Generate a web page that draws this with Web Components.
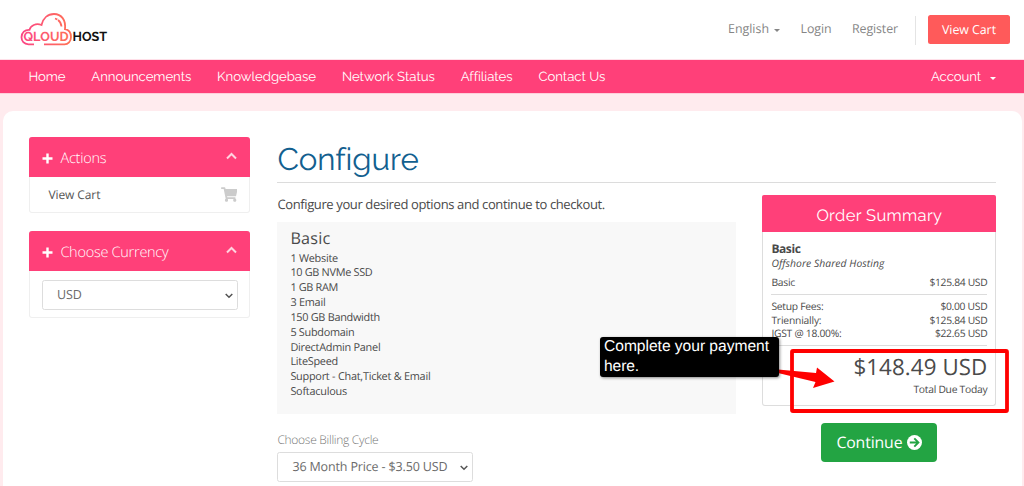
<!DOCTYPE html>
<html lang="en">
<head>
<meta charset="utf-8">
<title>Configure - QloudHost</title>
<style>
  :root {
    --pink: #ff4079;
    --head-font: Raleway, Lato, "Open Sans", sans-serif;
  }
  html, body { margin: 0; height: 486px; overflow: hidden; }
  body {
    background: #ffebee;
    color: #4a4a4a;
    font: 13px/1.5 "Open Sans", "Noto Sans", sans-serif;
    text-rendering: geometricPrecision;
  }
</style>
</head>
<body>
<shop-page>
  <site-header slot="header"></site-header>
  <site-nav slot="nav"></site-nav>
  <side-panel slot="side" label="Actions" width="46">
    <cart-link></cart-link>
  </side-panel>
  <side-panel slot="side" label="Choose Currency" width="108">
    <select-box style="margin:9px 12.5px 8px" width="25">USD</select-box>
  </side-panel>
  <product-config></product-config>
</shop-page>
<callout-note></callout-note>

<script>
function attach(el, html) {
  const template = document.createElement("template");
  template.innerHTML = html;
  el.attachShadow({ mode: "open" }).appendChild(
    template.content.cloneNode(true)
  );
}

// FitText.js: tracks a single line out to a set width
customElements.define(
  "fit-text",
  class FitText extends HTMLElement {
    constructor() {
      super();
      attach(this, `
      <style>
        :host { display: inline-block; white-space: nowrap; flex: none; }
        span { display: inline-block; }
      </style>
      <span><slot></slot></span>
      `);
    }
    connectedCallback() {
      const width = Number(this.getAttribute("width"));
      const span = this.shadowRoot.querySelector("span");
      const count = this.textContent.length;
      if (!width || count < 2) return;
      const natural = span.getBoundingClientRect().width;
      this.style.letterSpacing = (width - natural) / count + "px";
    }
  }
);

// SiteHeader.js
customElements.define(
  "site-header",
  class SiteHeader extends HTMLElement {
    constructor() {
      super();
      attach(this, `
      <style>
        :host {
          display: flex;
          align-items: center;
          justify-content: space-between;
          box-sizing: border-box;
          height: 60px;
          padding: 0 14px 0 20px;
          background: #fff;
          color: #858585;
          font-size: 12.4px;
        }
        .links { display: flex; align-items: center; }
        .links > * { margin-top: -2px; }
        .links .caret {
          border: 3px solid transparent;
          border-top-color: currentColor;
          border-bottom: 0;
          margin: 0 20.500px 0 5px;
        }
        .links .rule { width: 1px; height: 29px; background: #e4e4e4; margin: 0 12px 0 17px; }
        .links .cart {
          margin-top: -1px;
          width: 82px;
          height: 29px;
          line-height: 29px;
          border-radius: 2.5px;
          background: #ff5a5a;
          color: #fff;
          text-align: center;
        }
        svg { display: block; font: 700 13px Raleway, Inter, sans-serif; }
      </style>
      <svg width="90" height="36" viewBox="0 0 90 36" aria-label="QloudHost">
        <defs>
          <linearGradient id="g" x1="0" y1="0" x2="52" y2="0" gradientUnits="userSpaceOnUse">
            <stop offset="0" stop-color="#fb4487"/>
            <stop offset="1" stop-color="#ff7354"/>
          </linearGradient>
        </defs>
        <path d="M14 32.3H8.500C4 32.300 1.500 29 1.500 25.300C1.500 20.500 5 17.500 9.500 17.800C10.500 13.500 16 10.800 21.500 13C23 6 28 2 34 2C41.500 2 46 8 45 17.200C49 18 51 21 51 25C51 29.500 48 32.300 44.500 32.300H24" fill="none" stroke="url(#g)" stroke-width="1.800"/>
        <path d="M35 6.500C38.500 7.500 41 10 41.500 14.500" fill="none" stroke="url(#g)" stroke-width="1.800" stroke-dasharray="2.500 .8 20"/>
        <text x="3.500" y="29" fill="url(#g)" textLength="45" lengthAdjust="spacingAndGlyphs">QLOUD</text>
        <text x="52.500" y="29" fill="#111" textLength="34.500" lengthAdjust="spacingAndGlyphs">HOST</text>
      </svg>
      <div class="links">
        <fit-text width="41">English</fit-text><i class="caret"></i>
        <fit-text width="31" style="margin-right:20.5px">Login</fit-text>
        <fit-text width="46">Register</fit-text>
        <i class="rule"></i>
        <div class="cart"><fit-text width="54">View Cart</fit-text></div>
      </div>
      `);
    }
  }
);

// SiteNav.js
customElements.define(
  "site-nav",
  class SiteNav extends HTMLElement {
    constructor() {
      super();
      const items = [
        ["Home", 37],
        ["Announcements", 100],
        ["Knowledgebase", 99],
        ["Network Status", 93],
        ["Affiliates", 50],
        ["Contact Us", 67],
      ];
      attach(this, `
      <style>
        :host {
          display: flex;
          align-items: center;
          gap: 25.800px;
          box-sizing: border-box;
          height: 33px;
          margin-bottom: 18px;
          padding: 2px 28px 0 28.500px;
          background: var(--pink);
          box-shadow: 0 0 1px var(--pink);
          color: #fff;
          font: 13.2px/20px var(--head-font);
        }
        .account { display: flex; align-items: center; gap: 9px; margin-left: auto; }
        .account i {
          border: 3px solid transparent;
          border-top-color: #fff;
          border-bottom: 0;
          margin-top: 1px;
        }
      </style>
      ${items.map(([name, w]) => `<fit-text width="${w}">${name}</fit-text>`).join("")}
      <div class="account"><fit-text width="50">Account</fit-text><i></i></div>
      `);
    }
  }
);

// ShopPage.js
customElements.define(
  "shop-page",
  class ShopPage extends HTMLElement {
    constructor() {
      super();
      attach(this, `
      <style>
        :host { display: block; }
        main {
          display: grid;
          grid-template-columns: 221px 719px;
          column-gap: 27px;
          align-items: start;
          box-sizing: border-box;
          height: 375px;
          margin: 0 2px 0 3px;
          padding: 26px 0 0 26.400px;
          border-radius: 10px 10px 0 0;
          background: #fff;
        }
        aside { display: grid; gap: 18px; }
      </style>
      <slot name="header"></slot>
      <slot name="nav"></slot>
      <main>
        <aside><slot name="side"></slot></aside>
        <slot></slot>
      </main>
      `);
    }
  }
);

// SidePanel.js
customElements.define(
  "side-panel",
  class SidePanel extends HTMLElement {
    constructor() {
      super();
      attach(this, `
      <style>
        :host {
          display: block;
          border-radius: 3px;
          overflow: hidden;
          box-shadow: inset 0 0 0 1px #efefef;
        }
        header {
          display: flex;
          align-items: center;
          height: 40px;
          padding: 0 13px;
          background: var(--pink);
          color: #fff;
          font-size: 14.500px;
          font-weight: 300;
        }
        header fit-text { margin-top: 3px; }
        .plus { margin: 3px 7px 0 0; }
        .up { margin: -2px 0 0 auto; }
      </style>
      <header>
        <svg class="plus" width="11" height="11" viewBox="0 0 11 11"><path d="M5.500 .5v10M.5 5.500h10" stroke="#fff" stroke-width="2.400"/></svg>
        <fit-text width="${this.getAttribute("width")}">${this.getAttribute("label")}</fit-text>
        <svg class="up" width="11" height="8" viewBox="0 0 11 8"><path d="M1 6.500l4.500-4.500 4.500 4.500" fill="none" stroke="#ffd3df" stroke-width="2"/></svg>
      </header>
      <slot></slot>
      `);
    }
  }
);

// CartLink.js
customElements.define(
  "cart-link",
  class CartLink extends HTMLElement {
    constructor() {
      super();
      attach(this, `
      <style>
        :host {
          display: flex;
          align-items: center;
          justify-content: space-between;
          height: 36px;
          padding: 0 13px 0 19px;
          color: #555;
          font-size: 12px;
        }
        svg { margin-top: -2px; }
      </style>
      <fit-text width="52">View Cart</fit-text>
      <svg width="16.500" height="15" viewBox="0 0 576 512" fill="#ccc"><path d="M528.120 301.319l47.273-208C578.806 78.301 567.391 64 551.990 64H159.208l-9.166-44.810C147.758 8.021 137.930 0 126.529 0H24C10.745 0 0 10.745 0 24v16c0 13.255 10.745 24 24 24h69.883l70.248 343.435C147.325 417.100 136 435.222 136 456c0 30.928 25.072 56 56 56s56-25.072 56-56c0-15.674-6.447-29.835-16.824-40h209.647C430.447 426.165 424 440.326 424 456c0 30.928 25.072 56 56 56s56-25.072 56-56c0-22.172-12.888-41.332-31.579-50.405l5.517-24.276c3.413-15.018-8.002-29.319-23.403-29.319H218.117l-6.545-32h293.145c11.206 0 20.920-7.754 23.403-18.681z"/></svg>
      `);
    }
  }
);

// SelectBox.js
customElements.define(
  "select-box",
  class SelectBox extends HTMLElement {
    constructor() {
      super();
      attach(this, `
      <style>
        :host {
          display: flex;
          align-items: center;
          justify-content: space-between;
          box-sizing: border-box;
          width: 196px;
          height: 30px;
          padding: 0 4px 0 14px;
          border: 1px solid #ddd;
          border-radius: 2.500px;
          background: #fff;
          color: #6b6b6b;
          font-size: 12.500px;
        }
        svg { margin-top: 1px; }
      </style>
      <fit-text width="${this.getAttribute("width")}">${this.textContent}</fit-text>
      <svg width="8" height="6" viewBox="0 0 8 6"><path d="M.7 1l3.300 3.300 3.300-3.300" fill="none" stroke="#555" stroke-width="1.500"/></svg>
      `);
    }
  }
);

// OrderSummary.js
customElements.define(
  "order-summary",
  class OrderSummary extends HTMLElement {
    constructor() {
      super();
      const row = (name, w, price, pw) =>
        `<div class="row"><fit-text width="${w}">${name}</fit-text><fit-text width="${pw}">${price}</fit-text></div>`;
      attach(this, `
      <style>
        :host {
          display: block;
          box-sizing: border-box;
          height: 211px;
          border: 1px solid #ddd;
          border-top: 0;
          border-radius: 3px;
          font-size: 10.300px;
          line-height: 14px;
        }
        h2 {
          height: 37px;
          margin: 0 -1px;
          border-radius: 2px 2px 0 0;
          background: var(--pink);
          color: #fff;
          font: 16.500px/40px var(--head-font);
          text-align: center;
        }
        .body { padding: 8px 8px 0; }
        .name { font-size: 12px; font-weight: 700; line-height: 17px; }
        .group { font-style: italic; line-height: 15px; margin-bottom: 4px; }
        .row { display: flex; justify-content: space-between; height: 13.800px; }
        .rule { height: 1px; background: #dcdcdc; }
        .total { text-align: right; font-size: 22.300px; line-height: 30px; margin-top: 6px; height: 31px; }
        .due { text-align: right; }
      </style>
      <h2><fit-text width="126">Order Summary</fit-text></h2>
      <div class="body">
        <div class="name"><fit-text width="29">Basic</fit-text></div>
        <div class="group"><fit-text width="113">Offshore Shared Hosting</fit-text></div>
        ${row("Basic", 23.5, "$125.84 USD", 58)}
        <div class="rule" style="margin:4px 0 5px"></div>
        ${row("Setup Fees:", 52, "$0.00 USD", 47)}
        ${row("Triennially:", 50, "$125.84 USD", 58)}
        ${row("IGST @ 18.00%:", 70, "$22.65 USD", 52.5)}
        <div class="rule" style="margin-top:4px"></div>
        <div class="total"><fit-text width="134">$148.49 USD</fit-text></div>
        <div class="due"><fit-text width="74">Total Due Today</fit-text></div>
      </div>
      `);
    }
  }
);

// ProductConfig.js
customElements.define(
  "product-config",
  class ProductConfig extends HTMLElement {
    constructor() {
      super();
      const features = [
        ["1 Website", 47.5],
        ["10 GB NVMe SSD", 82],
        ["1 GB RAM", 47.5],
        ["3 Email", 35],
        ["150 GB Bandwidth", 89.5],
        ["5 Subdomain", 64],
        ["DirectAdmin Panel", 90],
        ["LiteSpeed", 47.5],
        ["Support - Chat,Ticket &amp; Email", 140],
        ["Softaculous", 56.5],
      ];
      attach(this, `
      <style>
        :host { display: block; }
        h1 {
          height: 45px;
          margin: 0;
          border-bottom: 1px solid #dcdcdc;
          color: #12608f;
          font: 31.200px/47px var(--head-font);
        }
        .columns { display: flex; justify-content: space-between; align-items: start; }
        .options { width: 459px; }
        .intro { height: 39px; line-height: 20px; padding-top: 11px; box-sizing: border-box; }
        .product {
          box-sizing: border-box;
          height: 192px;
          margin-bottom: 17px;
          padding: 5px 13px;
          background: #f8f8f8;
          font-size: 10.900px;
          line-height: 14.850px;
        }
        .product h3 { height: 24.500px; margin: 0; font-size: 16.200px; font-weight: 400; line-height: 23px; }
        .product div { height: 14.850px; }
        .label { height: 21px; line-height: 18px; font-size: 12px; font-weight: 300; color: #777; }
        .checkout { width: 234px; padding-top: 12px; }
        .continue {
          display: flex;
          align-items: center;
          justify-content: center;
          gap: 5px;
          width: 116px;
          height: 39px;
          margin: 17px auto 0;
          border-radius: 4px;
          background: #23a443;
          color: #fff;
          font-size: 15.800px;
        }
      </style>
      <h1><fit-text width="140">Configure</fit-text></h1>
      <div class="columns">
        <div class="options">
          <div class="intro"><fit-text width="327.5">Configure your desired options and continue to checkout.</fit-text></div>
          <div class="product">
            <h3><fit-text width="40">Basic</fit-text></h3>
            ${features.map(([name, w]) => `<div><fit-text width="${w}">${name}</fit-text></div>`).join("")}
          </div>
          <div class="label"><fit-text width="101">Choose Billing Cycle</fit-text></div>
          <select-box width="155">36 Month Price - $3.50 USD</select-box>
        </div>
        <div class="checkout">
          <order-summary></order-summary>
          <div class="continue">
            <fit-text width="66">Continue</fit-text>
            <svg width="15" height="15" viewBox="0 0 15 15"><circle cx="7.500" cy="7.500" r="7.500" fill="#fff"/><path d="M2.800 7.500h8.400M7.300 3.400l4.100 4.100-4.100 4.100" fill="none" stroke="#23a443" stroke-width="1.900"/></svg>
          </div>
        </div>
      </div>
      `);
    }
  }
);

// CalloutNote.js: annotation over the total
customElements.define(
  "callout-note",
  class CalloutNote extends HTMLElement {
    constructor() {
      super();
      attach(this, `
      <style>
        :host { position: absolute; left: 0; top: 0; pointer-events: none; }
        svg { position: absolute; left: 0; top: 0; }
        .note {
          position: absolute;
          left: 600px;
          top: 337px;
          box-sizing: border-box;
          width: 179px;
          height: 40px;
          padding: 0 4px;
          border-radius: 3px;
          background: #000;
          box-shadow: 1px 1px 3px rgba(0, 0, 0, .45);
          color: #fff;
          font: 15.600px/20px "Liberation Sans", Arial, sans-serif;
        }
        fit-text { display: block; }
      </style>
      <svg width="1024" height="486">
        <rect x="792" y="351" width="215" height="60" rx="1" fill="none" stroke="#f00" stroke-width="3.800"/>
        <path d="M778 369.500L816 373L817 367.500L834.500 381.500L813 388L815.500 382L778 373Z" fill="#f00"/>
      </svg>
      <div class="note"><fit-text width="165">Complete your payment</fit-text><fit-text width="35">here.</fit-text></div>
      `);
    }
  }
);
</script>
</body>
</html>
